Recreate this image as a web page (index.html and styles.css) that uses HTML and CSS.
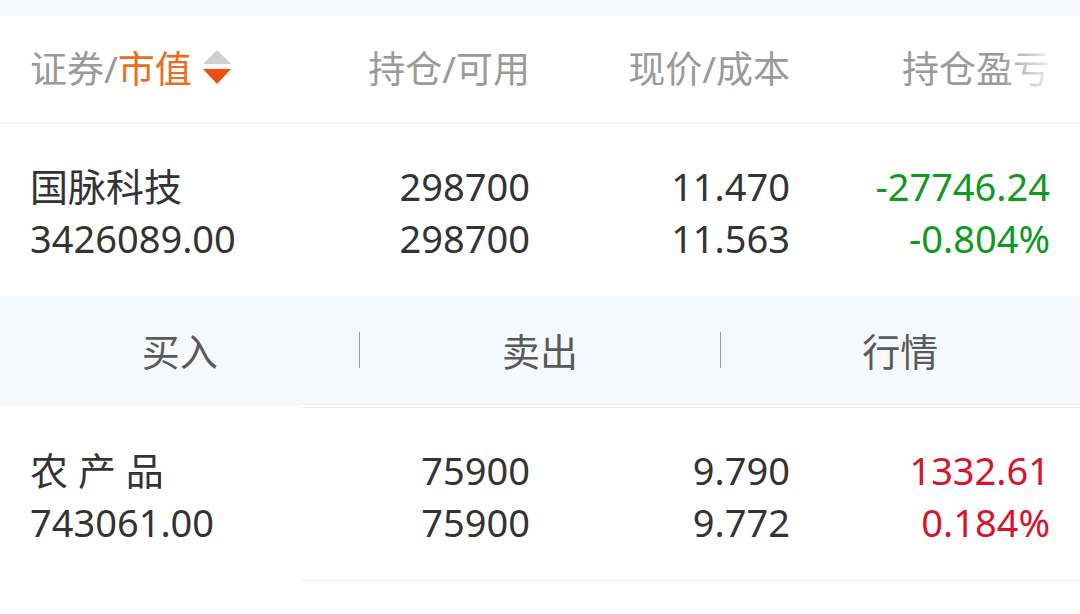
FILE: index.html
```html
<!DOCTYPE html>
<html lang="zh-CN">
<head>
    <meta charset="UTF-8">
    <meta name="viewport" content="width=device-width, initial-scale=1.0">
    <title>持仓</title>
    <link rel="stylesheet" href="styles.css">
</head>
<body>
    <div class="top-band"></div>

    <!-- En-tête du tableau -->
    <div class="list-head">
        <div class="head-cell first">
            证券/<span class="active">市值</span>
            <svg class="sort-icon" width="30" height="40" viewBox="0 0 30 40">
                <polygon points="15,1 29,15 1,15" fill="#cfcfcf"/>
                <polygon points="1,20 29,20 15,35" fill="#f24d0c"/>
            </svg>
        </div>
        <div class="head-cell">持仓/可用</div>
        <div class="head-cell">现价/成本</div>
        <div class="head-cell">持仓盈亏</div>
        <div class="head-fade"></div>
    </div>

    <div class="stock-row">
        <div class="cell first">
            <span>国脉科技</span>
            <span>3426089.00</span>
        </div>
        <div class="cell">
            <span>298700</span>
            <span>298700</span>
        </div>
        <div class="cell">
            <span>11.470</span>
            <span>11.563</span>
        </div>
        <div class="cell down">
            <span>-27746.24</span>
            <span>-0.804%</span>
        </div>
    </div>

    <div class="actions">
        <button class="action">买入</button>
        <span class="action-sep"></span>
        <button class="action">卖出</button>
        <span class="action-sep"></span>
        <button class="action">行情</button>
    </div>

    <div class="rule"></div>

    <div class="stock-row">
        <div class="cell first">
            <span>农 产 品</span>
            <span>743061.00</span>
        </div>
        <div class="cell">
            <span>75900</span>
            <span>75900</span>
        </div>
        <div class="cell">
            <span>9.790</span>
            <span>9.772</span>
        </div>
        <div class="cell up">
            <span>1332.61</span>
            <span>0.184%</span>
        </div>
    </div>

    <div class="rule"></div>
</body>
</html>
```

FILE: styles.css
```css
/* Global */
* {
    margin: 0;
    padding: 0;
    box-sizing: border-box;
}

body {
    background: #ffffff;
    font-family: 'Noto Sans', 'Noto Sans CJK SC', sans-serif;
    color: #333333;
    overflow: hidden;
}

.top-band {
    height: 16px;
    background: #f5f9fd;
}

/* En-tête */
.list-head {
    position: relative;
    display: grid;
    grid-template-columns: 240px 260px 260px 260px;
    align-items: center;
    height: 108px;
    padding: 0 30px;
    border-bottom: 2px solid #f3f3f3;
}

.head-cell {
    font-size: 37px;
    color: #9a9a9a;
    text-align: right;
    white-space: nowrap;
    padding-bottom: 4px;
}

.head-cell.first {
    display: flex;
    align-items: center;
    text-align: left;
}

.head-cell .active {
    color: #ef6a1c;
}

.sort-icon {
    margin-left: 10px;
    margin-top: 4px;
}

.head-fade {
    position: absolute;
    top: 0;
    right: 0;
    width: 80px;
    height: 100%;
    background: linear-gradient(to right, rgba(255, 255, 255, 0), #ffffff 75%);
}

/* Lignes de titres */
.stock-row {
    display: grid;
    grid-template-columns: 240px 260px 260px 260px;
    padding: 36px 30px 32px;
}

.cell {
    display: flex;
    flex-direction: column;
    align-items: flex-end;
    font-size: 38px;
    line-height: 52px;
    white-space: nowrap;
}

.cell.first {
    align-items: flex-start;
}

.cell.down {
    color: #10991f;
}

.cell.up {
    color: #d8142b;
}

/* Barre d'actions */
.actions {
    display: flex;
    align-items: center;
    height: 109px;
    background: #f5f9fe;
    border-bottom: 1px solid #eeeff1;
    margin-bottom: 2px;
}

.action {
    flex: 1;
    background: none;
    border: none;
    font-family: 'Noto Sans', 'Noto Sans CJK SC', sans-serif;
    font-size: 38px;
    color: #5a5a5a;
    padding-bottom: 2px;
}

.action-sep {
    width: 1px;
    height: 36px;
    background: #9d9d9d;
}

.rule {
    height: 1px;
    margin-left: 302px;
    background: #ececec;
}
```
